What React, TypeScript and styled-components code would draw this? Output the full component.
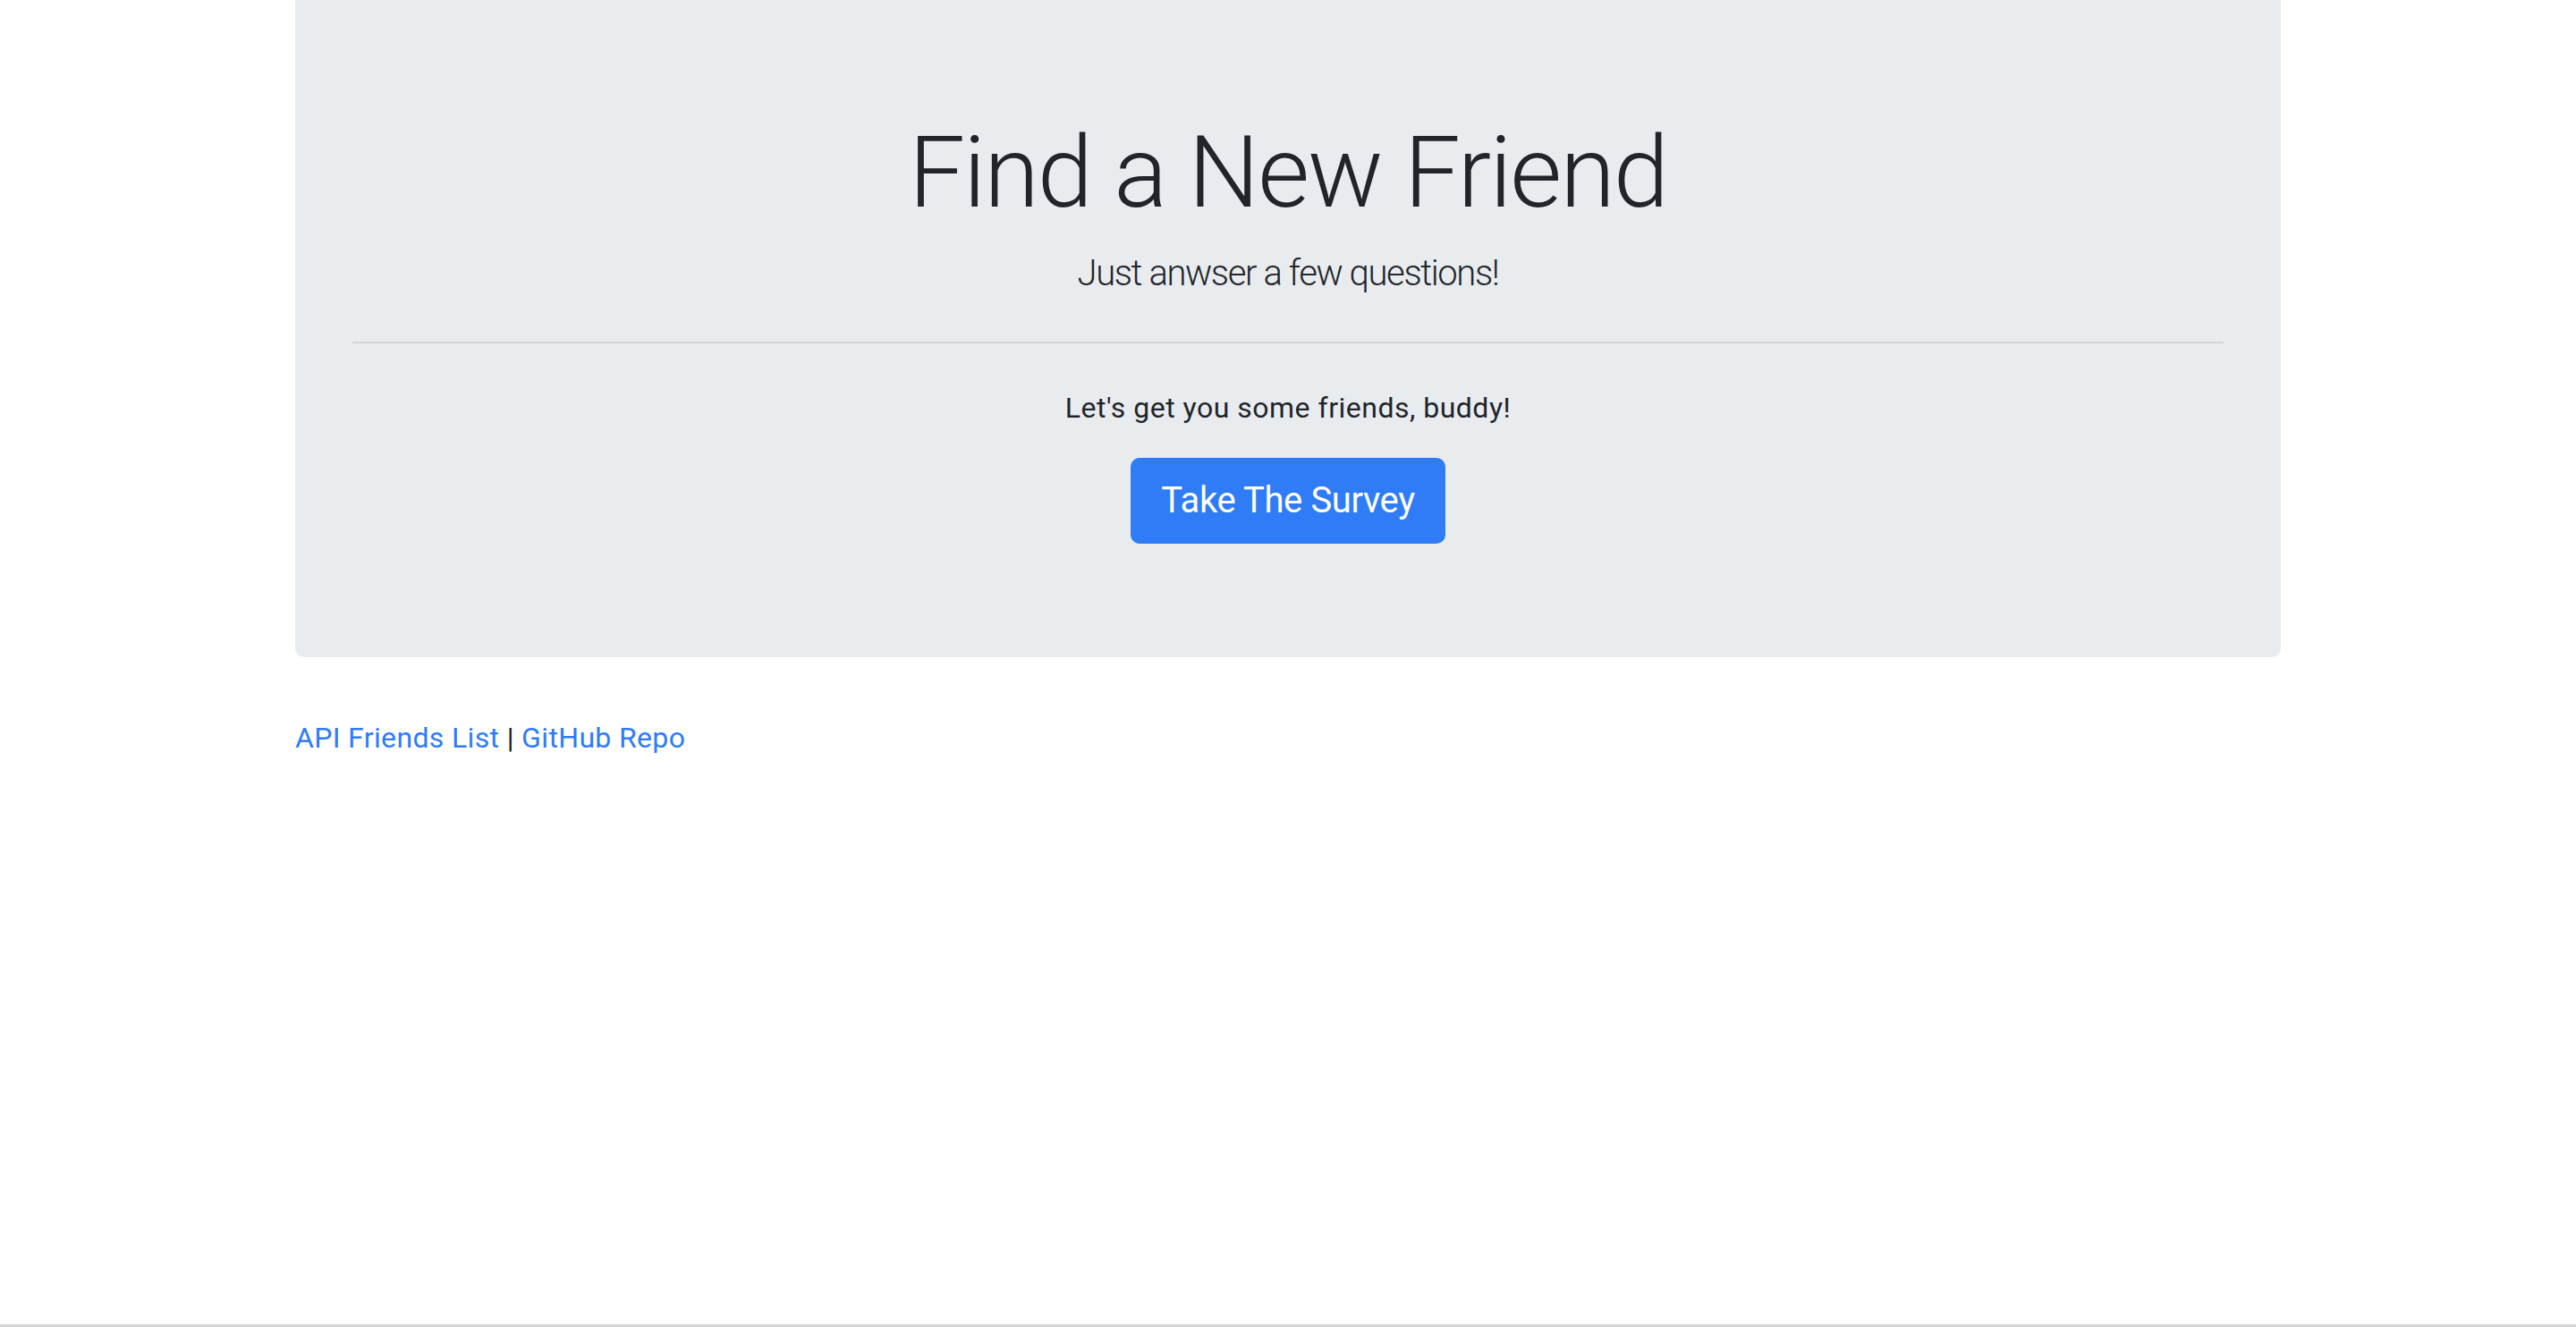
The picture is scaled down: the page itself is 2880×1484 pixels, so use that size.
import React from "react";
import styled, { createGlobalStyle } from "styled-components";

const GlobalStyle = createGlobalStyle`
  html, body {
    margin: 0;
    padding: 0;
    background: #ffffff;
  }
  body {
    font-family: Roboto, Inter, "Liberation Sans", sans-serif;
    color: #212529;
  }
  * { box-sizing: border-box; }
`;

const Page = styled.div`
  min-height: 100vh;
  border-bottom: 3px solid #d5d5d5;
`;

const Container = styled.div`
  width: 2220px;
  margin: 0 auto;
`;

const Jumbotron = styled.section`
  background: #e9ecef;
  border-radius: 0 0 10px 10px;
  padding: 126px 64px 127px;
  margin-bottom: 66px;
  text-align: center;
`;

const Title = styled.h1`
  margin: 0 0 16px;
  font-size: 112px;
  font-weight: 300;
  line-height: 134px;
  letter-spacing: -2px;
  color: #212529;
`;

const Lead = styled.p`
  margin: 0 0 46px;
  font-size: 40px;
  font-weight: 300;
  line-height: 60px;
  letter-spacing: -1.4px;
  color: #212529;
`;

const Divider = styled.hr`
  margin: 0 0 48px;
  border: 0;
  border-top: 2px solid rgba(0, 0, 0, 0.1);
`;

const Text = styled.p`
  margin: 0 0 32px;
  font-size: 32px;
  font-weight: 400;
  line-height: 48px;
  letter-spacing: 0.5px;
  color: #212529;
`;

const PrimaryButton = styled.a`
  display: inline-block;
  padding: 16px 32px;
  border: 2px solid #2f7cf6;
  border-radius: 10px;
  background: #2f7cf6;
  color: #ffffff;
  font-size: 40px;
  font-weight: 400;
  line-height: 60px;
  letter-spacing: -0.4px;
  text-decoration: none;
  cursor: pointer;
`;

const Footer = styled.p`
  margin: 0;
  font-size: 32px;
  line-height: 48px;
  letter-spacing: 0.35px;
  color: #212529;
`;

const FooterLink = styled.a`
  color: #2f7cf6;
  text-decoration: none;
`;

export default function App() {
  return (
    <Page>
      <GlobalStyle />
      <Container>
        <Jumbotron>
          <Title>Find a New Friend</Title>
          <Lead>Just anwser a few questions!</Lead>
          <Divider />
          <Text>Let's get you some friends, buddy!</Text>
          <PrimaryButton href="#survey">Take The Survey</PrimaryButton>
        </Jumbotron>
        <Footer>
          <FooterLink href="#api">API Friends List</FooterLink> |{" "}
          <FooterLink href="#repo">GitHub Repo</FooterLink>
        </Footer>
      </Container>
    </Page>
  );
}
